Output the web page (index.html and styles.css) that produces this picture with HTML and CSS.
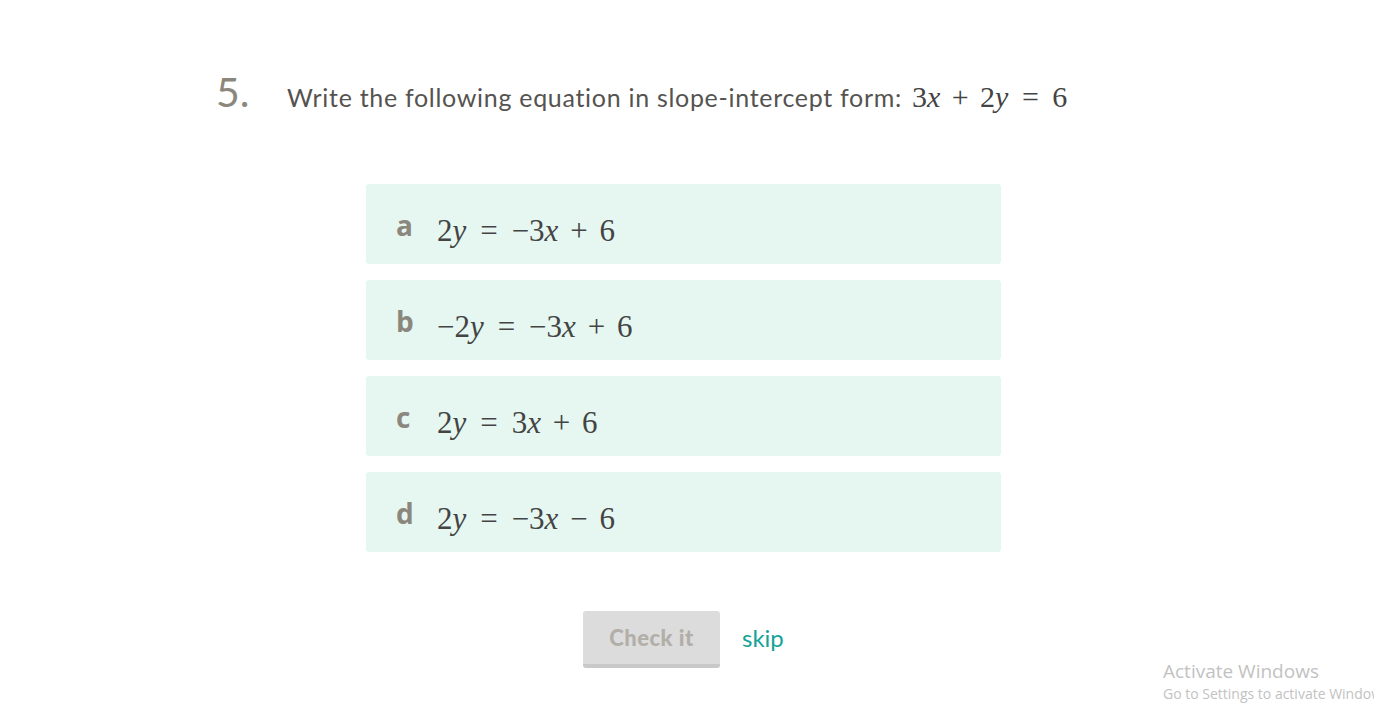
FILE: index.html
```html
<!DOCTYPE html>
<html>
<head>
<meta charset="utf-8">
<link rel="stylesheet" href="styles.css">
</head>
<body>
<div class="page">
  <div class="question">
    <span class="num">5.</span>
    <span class="qtext">Write the following equation in slope-intercept form:</span>
    <span class="math q-math">3<i>x</i><span class="bin">+</span>2<i>y</i><span class="rel">=</span>6</span>
  </div>
  <div class="choices">
    <div class="choice"><span class="label">a</span><span class="math">2<i>y</i><span class="rel">=</span>−3<i>x</i><span class="bin">+</span>6</span></div>
    <div class="choice"><span class="label">b</span><span class="math">−2<i>y</i><span class="rel">=</span>−3<i>x</i><span class="bin">+</span>6</span></div>
    <div class="choice"><span class="label">c</span><span class="math">2<i>y</i><span class="rel">=</span>3<i>x</i><span class="bin">+</span>6</span></div>
    <div class="choice"><span class="label">d</span><span class="math">2<i>y</i><span class="rel">=</span>−3<i>x</i><span class="bin">−</span>6</span></div>
  </div>
  <div class="actions">
    <button class="check">Check it</button>
    <a class="skip">skip</a>
  </div>
</div>
<div class="activate">
  <div class="act1">Activate Windows</div>
  <div class="act2">Go to Settings to activate Windows.</div>
</div>
</body>
</html>
```
FILE: styles.css
```css
html, body {
  margin: 0;
  padding: 0;
  background: #fff;
  overflow: hidden;
  height: 711px;
}
body {
  font-family: Lato, "Open Sans", sans-serif;
  position: relative;
}
.page {
  padding-top: 67px;
}
.question {
  display: flex;
  align-items: baseline;
  padding-left: 216px;
}
.num {
  font-size: 41px;
  color: #8c877c;
  width: 71px;
}
.qtext {
  font-size: 25px;
  letter-spacing: 0.7px;
  color: #555350;
}
.math {
  font-family: "Liberation Serif", "Times New Roman", serif;
  color: #444;
  white-space: pre;
}
.math i {
  font-style: italic;
}
.bin {
  margin: 0 0.38em;
}
.rel {
  margin: 0 0.45em;
}
.q-math {
  font-size: 30px;
  margin-left: 10px;
}
.choices {
  margin: 68px 0 0 366px;
  width: 635px;
  display: flex;
  flex-direction: column;
  gap: 16px;
}
.choice {
  height: 80px;
  background: #e5f7f0;
  border-radius: 3px;
  display: flex;
  align-items: baseline;
  padding-left: 30px;
  box-sizing: border-box;
  padding-top: 27px;
}
.label {
  font-family: "Open Sans", Lato, sans-serif;
  font-weight: 700;
  font-size: 28px;
  color: #8c877c;
  width: 41px;
  position: relative;
  top: -5px;
}
.choice .math {
  font-size: 31px;
}
.actions {
  display: flex;
  align-items: center;
  margin: 59px 0 0 583px;
  gap: 22px;
}
.check {
  width: 137px;
  height: 57px;
  background: #dcdcdc;
  border: none;
  border-bottom: 4px solid #c9c9c9;
  border-radius: 3px;
  font-family: Lato, sans-serif;
  font-weight: 900;
  font-size: 22px;
  letter-spacing: 0.5px;
  color: #b2aea8;
  padding: 0;
}
.skip {
  font-size: 24px;
  color: #13a397;
  margin-top: -4px;
}
.activate {
  position: absolute;
  left: 1163px;
  top: 659px;
  color: #c2c2c2;
  font-family: "Open Sans", sans-serif;
  white-space: nowrap;
}
.act1 {
  font-size: 19px;
  line-height: 24px;
}
.act2 {
  font-size: 14px;
  line-height: 22px;
}
```
